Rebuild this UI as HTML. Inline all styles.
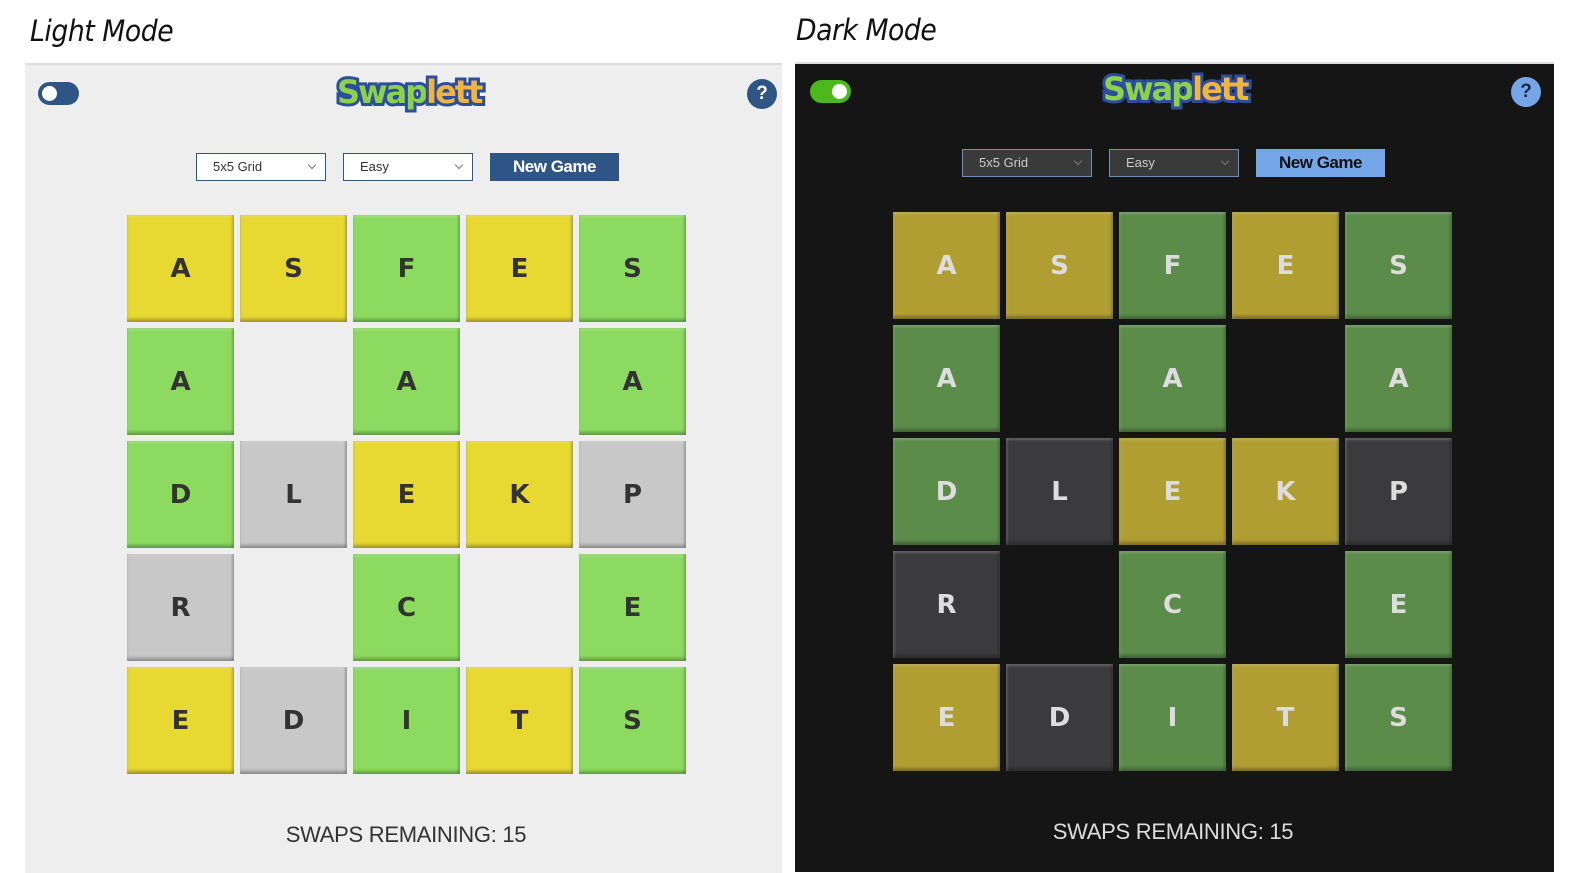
<!DOCTYPE html>
<html><head><meta charset="utf-8"><style>
*{margin:0;padding:0;box-sizing:border-box}
body{width:1581px;height:873px;background:#fff;position:relative;overflow:hidden;font-family:"Liberation Sans",sans-serif}
.a{position:absolute}
.title{font-family:"DejaVu Sans","Liberation Sans",sans-serif;font-style:italic;font-size:29px;color:#111;letter-spacing:-0.5px;font-weight:normal;transform:scaleX(0.92);transform-origin:left}
.panel{position:absolute;top:63px;height:810px;border-top:2px solid #ddd}
.tile{position:absolute;width:107px;height:107px;display:flex;align-items:center;justify-content:center;font-family:"DejaVu Sans",sans-serif;font-weight:bold;font-size:26px;box-shadow:inset 0 -3px 3px rgba(0,0,0,.28),inset -2px 0 2px rgba(0,0,0,.15),inset 2px 0 2px rgba(255,255,255,.15),inset 0 2px 2px rgba(255,255,255,.2)}
.L .tile{color:#333}
.D .tile{color:#ddd}
.y{background:#e8d832}.g{background:#8cdb60}.r{background:#c8c8c8}
.D .y{background:#b19e33}.D .g{background:#5b8c4a}.D .r{background:#3b3b3d}
.sel{position:absolute;height:28px;width:130px;font-size:13px;padding-left:16px;line-height:26px}
.sel:after{content:"";position:absolute;right:10px;top:8px;width:5px;height:5px;border-right:1px solid #777;border-bottom:1px solid #777;transform:rotate(45deg)}
.L .sel{background:#fff;border:1px solid #2e5585;color:#333}
.D .sel{background:#3a3a3a;border:1px solid #6e8fb8;color:#ccc}
.btn{position:absolute;height:28px;width:129px;font-weight:bold;font-size:17px;text-align:center;line-height:28px;letter-spacing:-0.5px}
.logo{position:absolute;font-family:"DejaVu Sans",sans-serif;font-weight:bold;font-size:32px;letter-spacing:-2px;-webkit-text-stroke:6px #2d4e9c;paint-order:stroke fill;line-height:1}
.help{position:absolute;width:30px;height:30px;border-radius:50%;text-align:center;font-weight:bold;font-size:19px;line-height:30px}
.swaps{position:absolute;font-size:22px;width:400px;text-align:center;letter-spacing:-0.3px}
</style></head><body>
<div class="a title" style="left:30px;top:14px">Light Mode</div>
<div class="a title" style="left:796px;top:13px">Dark Mode</div>

<div class="panel L" style="left:25px;width:757px;background:#eeeeee"></div>
<div class="panel D" style="left:795px;width:759px;background:#151515;top:62px"></div>

<div class="L">
 <div class="a" style="left:38px;top:82px;width:41px;height:23px;border-radius:12px;background:#2e5585"><div class="a" style="left:4px;top:4px;width:15px;height:15px;border-radius:50%;background:#fff"></div></div>
 <div class="logo" style="left:337px;top:76px"><span style="color:#8dd24a">Swap</span><span style="color:#f0b540">lett</span></div>
 <div class="help" style="left:747px;top:79px;background:#2e5585;color:#fff">?</div>
 <div class="sel" style="left:196px;top:153px">5x5 Grid</div>
 <div class="sel" style="left:343px;top:153px">Easy</div>
 <div class="btn" style="left:490px;top:153px;background:#2e5585;color:#fff">New Game</div>
 <div class="swaps" style="left:206px;top:822px;color:#333">SWAPS REMAINING: 15</div>
</div>

<div class="D">
 <div class="a" style="left:810px;top:80px;width:41px;height:23px;border-radius:12px;background:#4cb81c"><div class="a" style="left:22px;top:4px;width:15px;height:15px;border-radius:50%;background:#fff"></div></div>
 <div class="logo" style="left:1103px;top:73px"><span style="color:#8dd24a">Swap</span><span style="color:#f0b540">lett</span></div>
 <div class="help" style="left:1511px;top:77px;background:#74a6e8;color:#1a2a44">?</div>
 <div class="sel" style="left:962px;top:149px">5x5 Grid</div>
 <div class="sel" style="left:1109px;top:149px">Easy</div>
 <div class="btn" style="left:1256px;top:149px;background:#74a6e8;color:#111">New Game</div>
 <div class="swaps" style="left:973px;top:819px;color:#ddd">SWAPS REMAINING: 15</div>
</div>

<div class="L" id="lg"></div>
<div class="D" id="dg"></div>
<script>
var g=[["yA","yS","gF","yE","gS"],["gA","","gA","","gA"],["gD","rL","yE","yK","rP"],["rR","","gC","","gE"],["yE","rD","gI","yT","gS"]];
function build(id,x0,y0){var h="";for(var r=0;r<5;r++)for(var c=0;c<5;c++){var t=g[r][c];if(!t)continue;h+='<div class="tile '+t[0]+'" style="left:'+(x0+c*113)+'px;top:'+(y0+r*113)+'px">'+t[1]+'</div>';}document.getElementById(id).innerHTML=h;}
build("lg",127,215);build("dg",893,212);
</script>
</body></html>
